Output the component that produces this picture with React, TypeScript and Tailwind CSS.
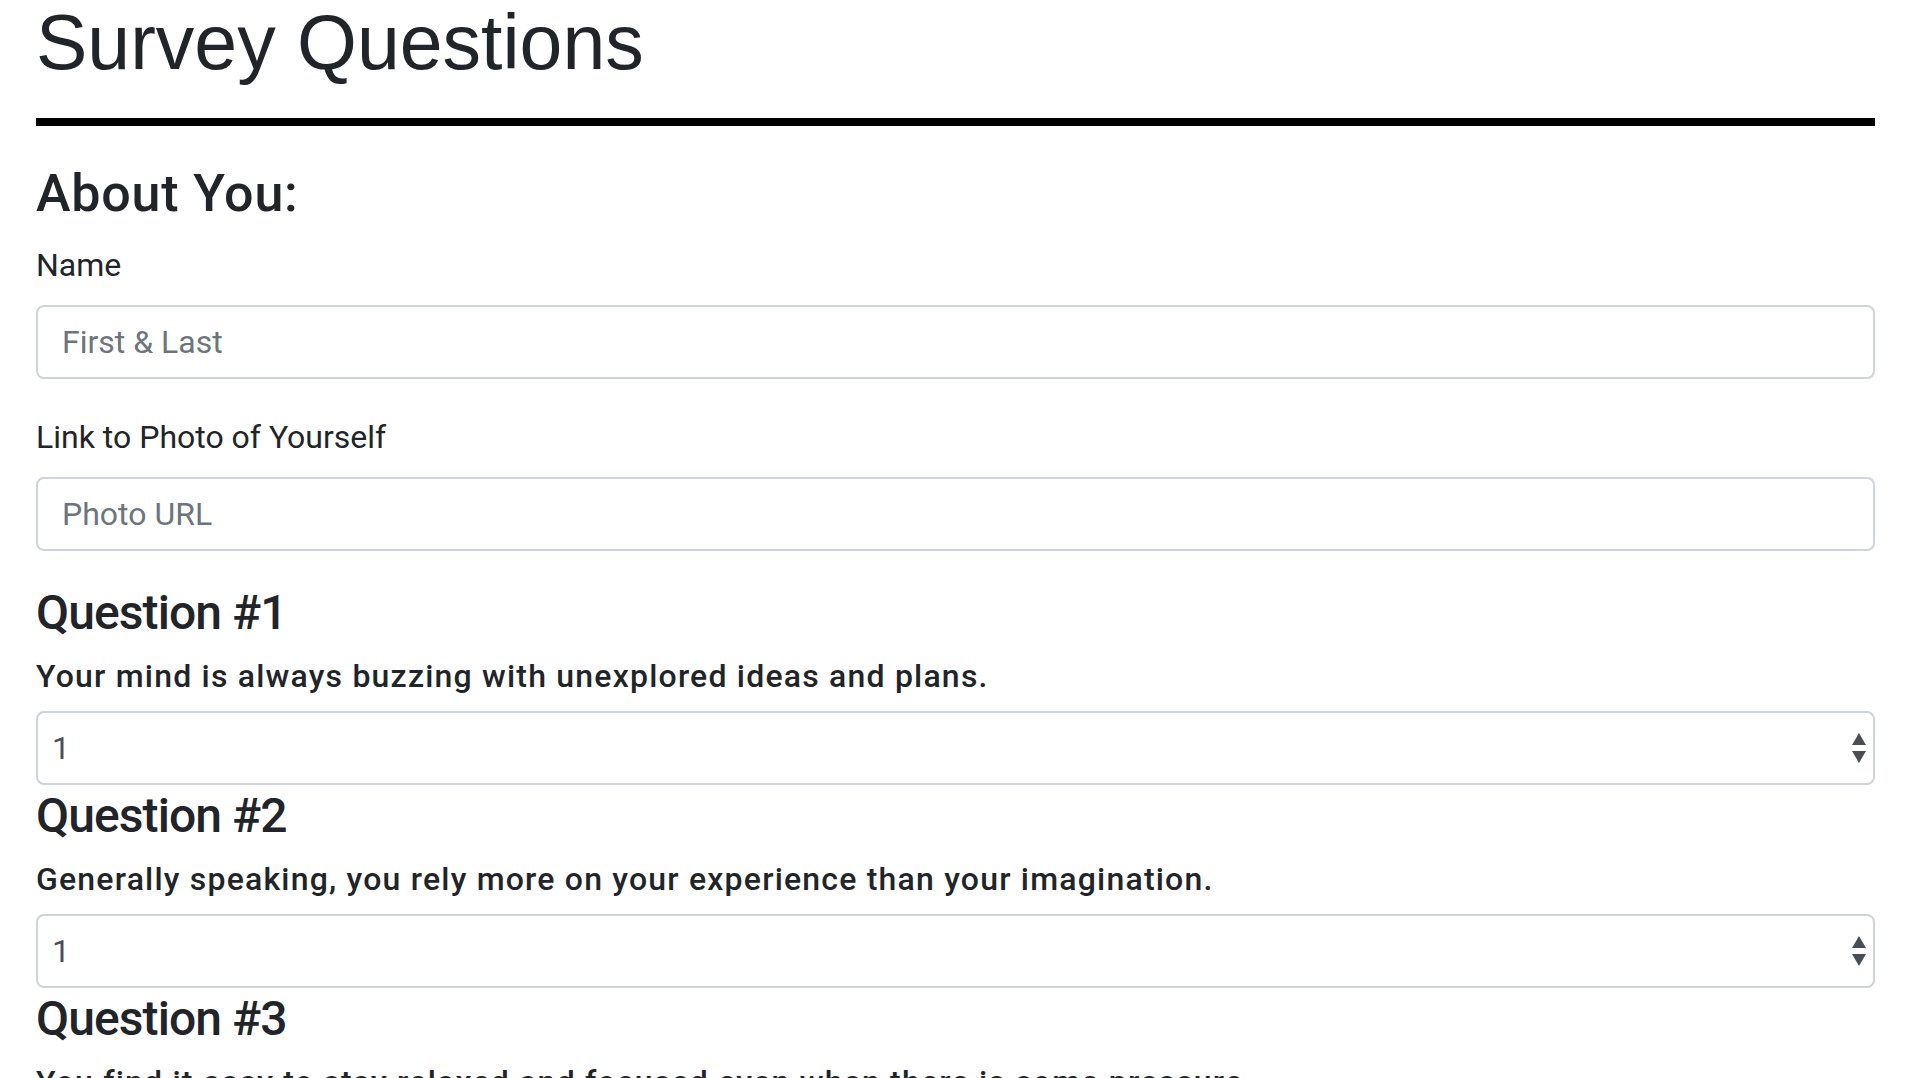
import React, { useState } from "react";

const questions: string[] = [
  "Your mind is always buzzing with unexplored ideas and plans.",
  "Generally speaking, you rely more on your experience than your imagination.",
  "You find it easy to stay relaxed and focused even when there is some pressure.",
  "You rarely do something just out of sheer curiosity.",
  "People can rarely upset you.",
  "It is often difficult for you to relate to other people's feelings.",
  "In a discussion, truth should be more important than people's sensitivities.",
  "You rarely get carried away by fantasies and ideas.",
  "You think that everyone's views should be respected regardless of whether they are supported by facts or not.",
  "You feel more energetic after spending time with a group of people.",
];

function SelectArrows() {
  return (
    <svg
      width="14"
      height="30"
      viewBox="0 0 14 30"
      className="pointer-events-none absolute right-[9px] top-1/2 -translate-y-1/2"
    >
      <polygon points="7,0 14,12 0,12" fill="#484e55" />
      <polygon points="0,18 14,18 7,30" fill="#484e55" />
    </svg>
  );
}

function App() {
  const [name, setName] = useState("");
  const [photo, setPhoto] = useState("");
  const [answers, setAnswers] = useState<string[]>(
    questions.map(() => "1")
  );

  const handleAnswer = (index: number, value: string) => {
    const next = [...answers];
    next[index] = value;
    setAnswers(next);
  };

  return (
    <div className="h-screen overflow-hidden bg-white pl-[36px] pr-[31px] font-['Roboto',sans-serif] text-[#212529]">

      {/* TITLE */}
      <h1 className="m-0 font-['Liberation_Sans',Arial,sans-serif] text-[77px] font-normal leading-[84px]">
        Survey Questions
      </h1>

      <div className="mt-[34px] h-[8px] bg-black" />

      {/* ABOUT YOU */}
      <h2 className="mt-[37px] text-[52px] font-medium leading-[62px] tracking-[0.8px]">
        About You:
      </h2>

      <label className="mt-[16px] block text-[32px] leading-[48px]">
        Name
      </label>

      <input
        type="text"
        placeholder="First & Last"
        value={name}
        onChange={(e) => setName(e.target.value)}
        className="mt-[16px] block h-[74px] w-full rounded-lg border-2 border-[#ced4da] bg-white px-6 text-[32px] text-[#495057] outline-none placeholder:text-[#6c757d]"
      />

      <label className="mt-[34px] block text-[32px] leading-[48px]">
        Link to Photo of Yourself
      </label>

      <input
        type="text"
        placeholder="Photo URL"
        value={photo}
        onChange={(e) => setPhoto(e.target.value)}
        className="mt-[16px] block h-[74px] w-full rounded-lg border-2 border-[#ced4da] bg-white px-6 text-[32px] text-[#495057] outline-none placeholder:text-[#6c757d]"
      />

      {/* QUESTIONS */}
      <div className="mt-[33px]">
        {questions.map((question, index) => (
          <div key={index} className="mb-[2px]">
            <h4 className="text-[48px] font-medium leading-[58px] tracking-[-0.9px]">
              Question #{index + 1}
            </h4>

            <p className="mt-[10px] text-[32px] font-medium leading-[48px] tracking-[1.2px]">
              {question}
            </p>

            <div className="relative mt-[11px]">
              <select
                value={answers[index]}
                onChange={(e) => handleAnswer(index, e.target.value)}
                className="block h-[74px] w-full appearance-none rounded-lg border-2 border-[#ced4da] bg-white pl-[14px] pr-10 text-[32px] text-[#495057] outline-none"
              >
                <option value="1">1</option>
                <option value="2">2</option>
                <option value="3">3</option>
                <option value="4">4</option>
                <option value="5">5</option>
              </select>
              <SelectArrows />
            </div>
          </div>
        ))}
      </div>

    </div>
  );
}

export default App;
